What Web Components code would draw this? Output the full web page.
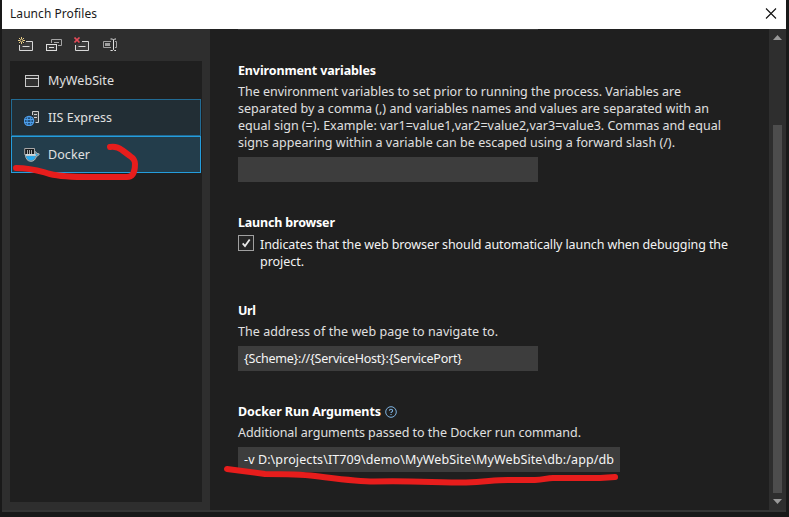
<!DOCTYPE html>
<html lang="en">
<head>
<meta charset="utf-8">
<title>Launch Profiles</title>
<style>
html,body{margin:0;height:100%;overflow:hidden;background:#191919}
body{font:12.5px/17px "Noto Sans","Open Sans",sans-serif;color:#e0e0e0}
</style>
</head>
<body>
<launch-dialog></launch-dialog>
<script>
const define=(name,html,setup)=>customElements.define(name,class extends HTMLElement{
  constructor(){super();this.attachShadow({mode:'open'}).innerHTML=html}
  connectedCallback(){if(setup)setup.call(this,this.shadowRoot)}
});

/* One line of text, letter-spaced to fill the width given in "w". */
define('text-line',`<style>:host{display:block;white-space:pre;height:17px;line-height:17px}span{display:inline-block}</style><span><slot></slot></span>`,function(r){
  const s=r.querySelector('span'),w=+this.getAttribute('w'),n=this.textContent.length;
  if(w)s.style.letterSpacing=((w-s.getBoundingClientRect().width)/(n-1))+'px';
});

const icons={
add:`<path d="M8 4.500H14.500V13.500H1.500V8" fill="#3b3b3b" stroke="#d8d8d8"/><path d="M4.500 9.500H11.500" stroke="#d8d8d8"/><rect x="0" y="0" width="7" height="7" fill="#2e2e2e"/><path d="M3.500 0V7M0 3.500H7M1 1L6 6M6 1L1 6" stroke="#e8cd87"/><rect x="2.500" y="2.500" width="2" height="2" fill="#2d2d2d"/>`,
copy:`<path d="M5.500 6V2.500H15.500V8.500H12M8 5.500H13" fill="none" stroke="#a5a5a5"/><rect x=".5" y="7.500" width="10" height="6" fill="#3b3b3b" stroke="#dedede"/><path d="M3 10.500H8" stroke="#dedede"/>`,
del:`<path d="M8 4.500H14.500V13.500H1.500V8" fill="#3b3b3b" stroke="#d8d8d8"/><path d="M4.500 9.500H11.500" stroke="#d8d8d8"/><rect x="0" y="0" width="7" height="7" fill="#2e2e2e"/><path d="M.5 .5L5.500 5.500M5.500 .5L.5 5.500" stroke="#e34b59" stroke-width="1.600"/>`,
rename:`<path d="M9 4.500H1.500V10.500H9M13 4.500H14.500V10.500H13" fill="none" stroke="#a0a0a0"/><rect x="3" y="6" width="5" height="3" fill="#a0a0a0"/><path d="M8.500 2H10.500L11.500 3L12.500 2H14M11.500 3V12.500M8.500 13.500H10.500L11.500 12.500L12.500 13.500H14" fill="none" stroke="#e0e0e0"/>`,
web:`<rect x="1.500" y="2.500" width="13" height="11" fill="#303030" stroke="#c8c8c8"/><path d="M1.500 5.500H14.500" stroke="#d5d5d5"/>`,
iis:`<path d="M8.500 5V1.500H14.500V12.500H11.500" fill="#3b4144" stroke="#d0d0d0"/><path d="M10 4.500H13M10 7.500H13" stroke="#d0d0d0"/><circle cx="5" cy="11" r="4.700" fill="#22507b" stroke="#4d9eea" stroke-width="1.200"/><ellipse cx="5" cy="11" rx="2" ry="4.600" fill="none" stroke="#4d9eea"/><path d="M.5 9.500H9.500M.5 12.500H9.500" stroke="#4d9eea"/>`,
docker:`<path d="M.7 1.500H10.500V7.500H.7Z" fill="#16191b" stroke="#a8a8a8"/><path d="M3.500 3V7M5.500 3V7M7.500 3V7" stroke="#b8b8b8" stroke-width=".9"/><path d="M1.300 7.500H10.700Q10.200 5.500 11.200 4.500L13 6.300L15.300 7Q14.500 9.200 12.500 9.200Q11 14.300 7 14.300Q2 14.300 1.300 7.500Z" fill="#6f8994" stroke="#a9b4b8"/><path d="M2.200 9.200H11.500Q10.500 13.200 7 13.300Q3.200 13.300 2.200 9.200Z" fill="#25aaf0"/><path d="M2 8H12" stroke="#eef4f5" stroke-width="1.200"/><circle cx="12.500" cy="7.700" r="1" fill="#31b0f0"/>`,
help:`<circle cx="8" cy="8" r="5.300" fill="none" stroke="#7eb2df"/><path d="M6.400 6.800Q6.400 5.300 8 5.300T9.600 6.700Q9.600 7.500 8.700 7.900Q8 8.200 8 9M8 10V11" fill="none" stroke="#7eb2df" stroke-width="1.100"/>`,
close:`<path d="M3 2.500L13 12.500M13 2.500L3 12.500" stroke="#111" stroke-width="1.100"/>`
};
define('ui-icon',`<style>:host{display:block;width:16px;height:16px;flex:none}svg{display:block}</style><svg width="16" height="16" viewBox="0 0 16 16"></svg>`,function(r){
  r.querySelector('svg').innerHTML=icons[this.getAttribute('name')];
});

define('title-bar',`<style>:host{display:flex;align-items:center;justify-content:space-between;height:29px;box-sizing:border-box;padding:0 7px 2px 8px;background:#fff;color:#1a1a1a;font-size:12px}</style><text-line w="87">Launch Profiles</text-line><ui-icon name="close"></ui-icon>`);

define('profile-item',`<style>:host{display:flex;align-items:center;gap:8px;box-sizing:border-box;height:37px;padding:0 12px;border:1px solid transparent;color:#e0e0e0}
:host([state=hover]){background:#222e35;border-color:#226b94}
:host([state=selected]){background:#233d4b;border-color:#249ddd}</style><slot name="icon"></slot><slot></slot>`);

define('profile-panel',`<style>:host{display:flex;flex-direction:column;width:208px;box-sizing:border-box;padding:0 8px 8px;background:#2e2e2e}
nav{display:flex;gap:12px;height:32px;box-sizing:border-box;padding:8px 0 0 8px}
main{flex:1;background:#1f1f1f;padding:1px}</style>
<nav><ui-icon name="add"></ui-icon><ui-icon name="copy"></ui-icon><ui-icon name="del"></ui-icon><ui-icon name="rename"></ui-icon></nav>
<main>
<profile-item><ui-icon slot="icon" name="web"></ui-icon><text-line w="66">MyWebSite</text-line></profile-item>
<profile-item state="hover"><ui-icon slot="icon" name="iis"></ui-icon><text-line w="64">IIS Express</text-line></profile-item>
<profile-item state="selected"><ui-icon slot="icon" name="docker"></ui-icon><text-line w="42">Docker</text-line></profile-item>
</main>`);

define('text-input',`<style>:host{display:flex;align-items:center;box-sizing:border-box;width:300px;height:25px;padding:0 6px;background:#3d3d3d;color:#f5f5f5}:host([wide]){width:382px}</style><slot></slot>`);

define('check-box',`<style>:host{display:flex;gap:6px;color:#f3f3f3}svg{display:block;flex:none}div{padding-top:1px}</style>
<svg width="16" height="16"><rect x=".5" y=".5" width="15" height="15" fill="#252525" stroke="#a0a0a0"/><path d="M4.700 8.300L7 11L11.700 4.500" fill="none" stroke="#e8e8e8" stroke-width="1.800"/></svg><div><slot></slot></div>`);

define('setting-group',`<style>:host{display:block}header{display:flex;align-items:center;height:17px;gap:2px;font-weight:700;color:#fff}.body{padding-top:4px}::slotted(text-input){margin-top:6px}</style>
<header><slot name="title"></slot></header><div class="body"><slot></slot></div>`);

define('settings-form',`<style>:host{display:flex;flex-direction:column;flex:1;min-width:0;box-sizing:border-box;padding-left:28px;background:#1f1f1f}
.prior{width:300px;height:1px;background:#3a3a3a;margin-bottom:32px}
.env,.launch,.url{margin-bottom:32px}</style>
<div class="prior"></div>
<setting-group class="env"><text-line slot="title" w="138">Environment variables</text-line>
<text-line w="443">The environment variables to set prior to running the process. Variables are</text-line>
<text-line w="471">separated by a comma (,) and variables names and values are separated with an</text-line>
<text-line w="483">equal sign (=). Example: var1=value1,var2=value2,var3=value3. Commas and equal</text-line>
<text-line w="437">signs appearing within a variable can be escaped using a forward slash (/).</text-line>
<text-input></text-input></setting-group>
<setting-group class="launch"><text-line slot="title" w="97">Launch browser</text-line>
<check-box><text-line w="468">Indicates that the web browser should automatically launch when debugging the</text-line><text-line w="44">project.</text-line></check-box></setting-group>
<setting-group class="url"><text-line slot="title" w="18">Url</text-line>
<text-line w="260">The address of the web page to navigate to.</text-line>
<text-input><text-line w="218">{Scheme}://{ServiceHost}:{ServicePort}</text-line></text-input></setting-group>
<setting-group><text-line slot="title" w="143">Docker Run Arguments</text-line><ui-icon slot="title" name="help"></ui-icon>
<text-line w="343">Additional arguments passed to the Docker run command.</text-line>
<text-input wide><text-line w="370">-v D:\\projects\\IT709\\demo\\MyWebSite\\MyWebSite\\db:/app/db</text-line></text-input></setting-group>`);

define('scroll-bar',`<style>:host{display:flex;flex-direction:column;align-items:center;width:17px;background:#2e2e2e}
svg{display:block;flex:none}.thumb{width:9px;height:368px;margin-top:79px;background:#4d4d4d}</style>
<svg width="17" height="17"><path d="M4 11L8.500 6L13 11Z" fill="#999"/></svg><div class="thumb"></div><svg width="17" height="17"><path d="M4 6L8.500 11L13 6Z" fill="#999"/></svg>`);

define('ink-marks',`<style>:host{position:absolute;inset:0;pointer-events:none}svg{display:block}</style>
<svg width="789" height="517" fill="none" stroke="#e71d1c" stroke-width="6" stroke-linecap="round" stroke-linejoin="round">
<path d="M16 168C32 168 39 171 50 174C62 177 77 177 90 177H127C133 177 135 171 135 164Q135 159 130 156L122 150Q117 146 110 147"/>
<path d="M227 469L265 474C286 474 298 474 315 476C340 479 358 481.500 374 481.500C410 480.500 436 482.500 466 482.500C486 482 493 480 508 480H535C544 480 546 478 553 478H600L615 477"/></svg>`);

define('launch-dialog',`<style>:host{display:block;position:relative;width:789px;height:517px;box-sizing:border-box;padding-left:2px;overflow:hidden}
.window{width:784px;height:512px;box-sizing:border-box;border-bottom:2px solid #353535;display:flex;flex-direction:column}
.body{display:flex;flex:1;min-height:0}</style>
<div class="window"><title-bar></title-bar><div class="body"><profile-panel></profile-panel><settings-form></settings-form><scroll-bar></scroll-bar></div></div><ink-marks></ink-marks>`);
</script>
</body>
</html>
